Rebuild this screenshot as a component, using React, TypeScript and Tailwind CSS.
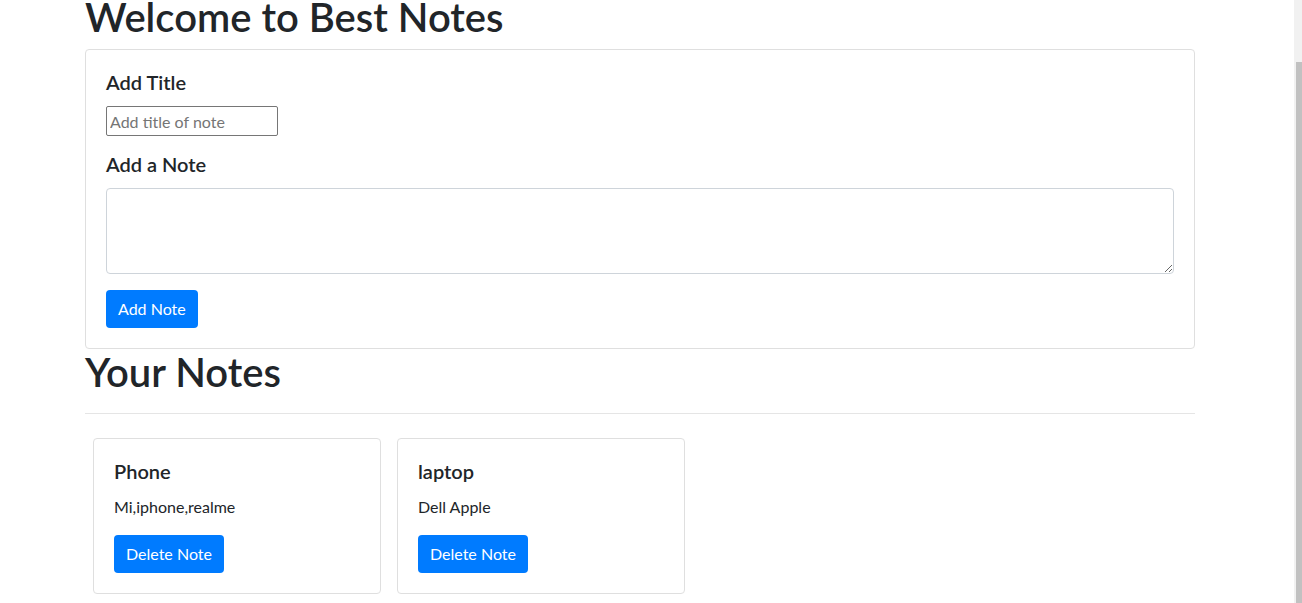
import React from 'react';

interface Note {
  title: string;
  body: string;
}

const notes: Note[] = [
  { title: 'Phone', body: 'Mi,iphone,realme' },
  { title: 'laptop', body: 'Dell Apple' },
];

function NoteCard({ note }: { note: Note }) {
  return (
    <div className="w-[288px] mx-2 my-2 border border-[#dfdfdf] rounded-[4px] p-5">
      <h5 className="text-[20px] leading-[24px] font-semibold mb-3">{note.title}</h5>
      <p className="text-[16px] leading-[24px] mb-4">{note.body}</p>
      <button className="h-[38px] px-3 rounded-[4px] bg-[#007bff] text-white text-[16px] leading-[24px]">
        Delete Note
      </button>
    </div>
  );
}

export default function App() {
  return (
    <div className="flex h-[603px] overflow-hidden bg-white text-[#212529] font-['Lato',sans-serif]">
      <div className="flex-1 pl-[85px]">
        <div className="w-[1110px]">
          <h1 className="text-[40px] leading-[48px] font-semibold -mt-[7px] mb-2">Welcome to Best Notes</h1>

          <div className="border border-[#dfdfdf] rounded-[4px] p-5">
            <h5 className="text-[20px] leading-[24px] font-semibold mb-3">Add Title</h5>
            <input
              className="block w-[172px] h-[30px] border border-[#767676] rounded-[2px] px-[3px] text-[16px] placeholder:text-[#757575] outline-none"
              placeholder="Add title of note"
            />
            <h5 className="text-[20px] leading-[24px] font-semibold mt-[16px] mb-[12px]">Add a Note</h5>
            <textarea
              rows={3}
              className="block w-full h-[86px] border border-[#ced4da] rounded-[4px] px-3 py-[6px] text-[16px] outline-none"
            />
            <button className="mt-4 h-[38px] px-3 rounded-[4px] bg-[#007bff] text-white text-[16px] leading-[24px]">
              Add Note
            </button>
          </div>

          <h1 className="text-[40px] leading-[48px] font-semibold -mt-px mb-2">Your Notes</h1>
          <hr className="mt-[17px] mb-4 border-0 border-t border-[#e5e5e5]" />

          <div className="flex">
            {notes.map((n) => (
              <NoteCard key={n.title} note={n} />
            ))}
          </div>
        </div>
      </div>

      <div className="w-[8px] bg-[#f1f1f1] pt-[62px]">
        <div className="ml-[2px] h-full bg-[#c1c1c1]" />
      </div>
    </div>
  );
}
